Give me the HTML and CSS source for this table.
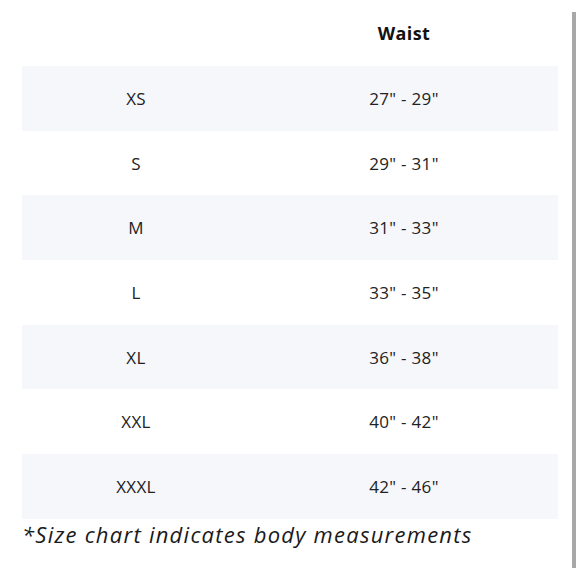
FILE: index.html
```html
<!DOCTYPE html>
<html>
<head>
<meta charset="utf-8">
<link rel="stylesheet" href="styles.css">
</head>
<body>
<div class="page">
  <table class="chart">
    <thead>
      <tr><th class="c1"></th><th class="c2">Waist</th></tr>
    </thead>
    <tbody>
      <tr class="odd"><td>XS</td><td>27" - 29"</td></tr>
      <tr><td>S</td><td>29" - 31"</td></tr>
      <tr class="odd"><td>M</td><td>31" - 33"</td></tr>
      <tr><td>L</td><td>33" - 35"</td></tr>
      <tr class="odd"><td>XL</td><td>36" - 38"</td></tr>
      <tr><td>XXL</td><td>40" - 42"</td></tr>
      <tr class="odd"><td>XXXL</td><td>42" - 46"</td></tr>
    </tbody>
  </table>
  <p class="note">*Size chart indicates body measurements</p>
</div>
<div class="scrollbar"></div>
</body>
</html>
```
FILE: styles.css
```css
html, body {
  margin: 0;
  padding: 0;
  background: #fff;
}
body {
  font-family: "Open Sans", "DejaVu Sans", sans-serif;
  color: #1a1a1a;
  width: 580px;
  height: 580px;
  overflow: hidden;
  position: relative;
}
.page {
  padding: 0 22px;
  width: 536px;
}
.chart {
  width: 536px;
  border-collapse: collapse;
  table-layout: fixed;
}
.c1 { width: 228px; }
.chart th {
  height: 66px;
  font-weight: 700;
  font-size: 18px;
  letter-spacing: 0.4px;
  color: #111;
  text-align: center;
  padding: 0;
}
.chart td {
  height: 64.7px;
  padding: 0;
  text-align: center;
  font-size: 17px;
  letter-spacing: 0.3px;
  color: #222;
}
.chart tr.odd td {
  background: #f6f7fb;
}
.note {
  margin: 0;
  font-style: italic;
  font-size: 22px;
  letter-spacing: 1.25px;
  line-height: 30px;
  color: #1a1a1a;
}
.scrollbar {
  position: absolute;
  left: 572px;
  top: 12px;
  width: 4px;
  height: 556px;
  background: #a8a8a8;
}
```
